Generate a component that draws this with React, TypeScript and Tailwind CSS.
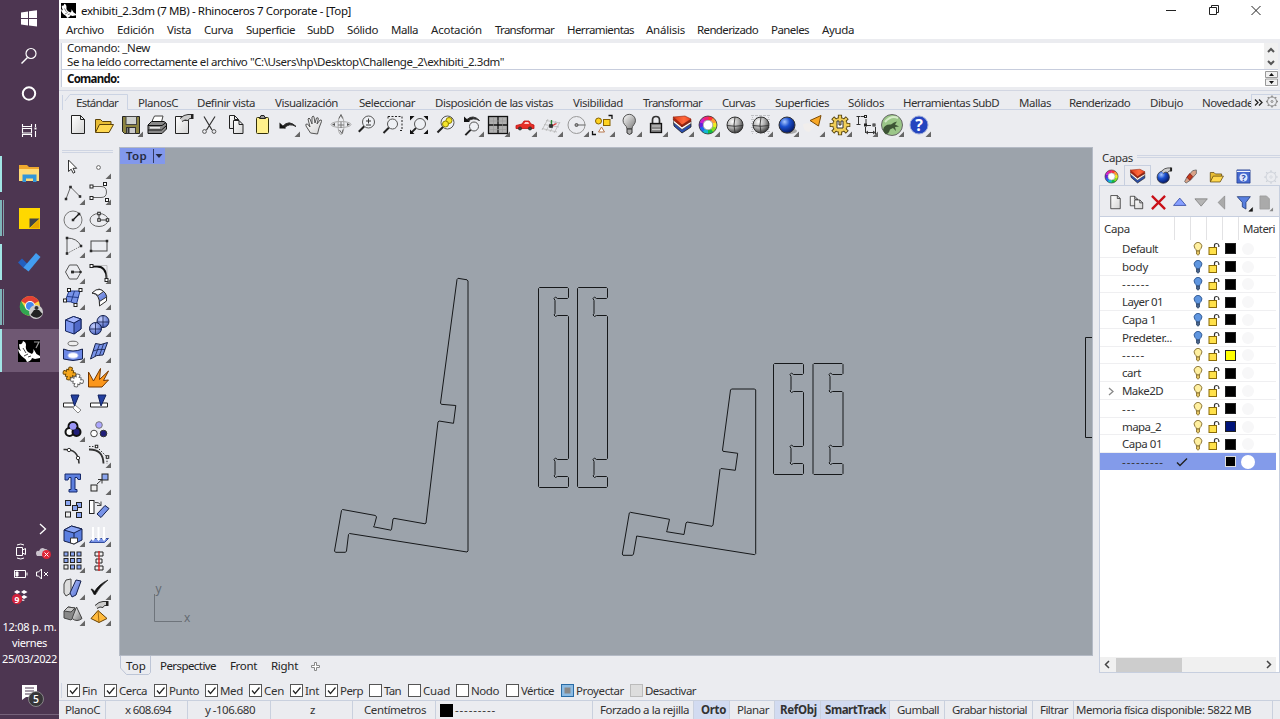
import React, { useLayoutEffect, useRef, useState } from "react";

type Item = [string, number, number];

/** Single line label whose tracking is adjusted to fill a given width. */
function Label({ text, w, className = "" }: { text: string; w: number; className?: string }) {
  const ref = useRef<HTMLSpanElement>(null);
  const [ls, setLs] = useState(0);
  useLayoutEffect(() => {
    if (ref.current) setLs((w - ref.current.getBoundingClientRect().width) / text.length);
  }, [w, text]);
  return (
    <span className={"block shrink-0 whitespace-nowrap " + className} style={{ width: w }}>
      <span ref={ref} style={{ letterSpacing: ls }}>{text}</span>
    </span>
  );
}

/** Row of labels; each item carries its start and end on the row's axis. */
function LabelRow({ items, start }: { items: Item[]; start: number }) {
  return (
    <>
      {items.map(([t, a, b], i) => (
        <div key={t} className="shrink-0" style={{ marginLeft: a - (i ? items[i - 1][2] : start) }}>
          <Label text={t} w={b - a} />
        </div>
      ))}
    </>
  );
}

function Ico({ children, tri = false, className = "h-[26px] w-[26px]" }: { children?: React.ReactNode; tri?: boolean; className?: string }) {
  return (
    <svg viewBox="0 0 26 26" className={"block shrink-0 overflow-visible " + className} fill="none" stroke="#333" strokeWidth="1">
      {children}
      {tri && <path d="M25 19.5V25H19.5Z" fill="#666" stroke="none" />}
    </svg>
  );
}

const Defs = () => (
  <svg className="absolute h-0 w-0">
    <defs>
      <linearGradient id="paper" x1="0" y1="0" x2="1" y2="1"><stop offset="0" stopColor="#fff" /><stop offset="1" stopColor="#d4d4d4" /></linearGradient>
      <linearGradient id="blue" x1="0" y1="0" x2="1" y2="1"><stop offset="0" stopColor="#b9c6fb" /><stop offset="1" stopColor="#4464cf" /></linearGradient>
      <linearGradient id="red" x1="0" y1="0" x2="1" y2="0"><stop offset="0" stopColor="#e03a18" /><stop offset=".6" stopColor="#ff6a3c" /><stop offset="1" stopColor="#f0401e" /></linearGradient>
      <linearGradient id="grey" x1="0" y1="0" x2="1" y2="1"><stop offset="0" stopColor="#fff" /><stop offset="1" stopColor="#777" /></linearGradient>
      <radialGradient id="ball" cx=".35" cy=".3" r=".8"><stop offset="0" stopColor="#fff" /><stop offset=".5" stopColor="#aaa" /><stop offset="1" stopColor="#222" /></radialGradient>
      <radialGradient id="bball" cx=".35" cy=".3" r=".8"><stop offset="0" stopColor="#a9c8ff" /><stop offset=".4" stopColor="#1a50cf" /><stop offset="1" stopColor="#020d50" /></radialGradient>
      <radialGradient id="sball" cx=".35" cy=".3" r=".8"><stop offset="0" stopColor="#c5d0ff" /><stop offset="1" stopColor="#3d58b8" /></radialGradient>
    </defs>
  </svg>
);

const Sq = ({ x, y, s = 3, f = "#fff" }: { x: number; y: number; s?: number; f?: string }) => (
  <rect x={x - s / 2} y={y - s / 2} width={s} height={s} fill={f} stroke="#222" />
);
const Page = ({ x = 6.5, y = 3.5, w = 13, h = 18 }: { x?: number; y?: number; w?: number; h?: number }) => (
  <path d={`M${x} ${y}h${w - 4}l4 4v${h - 4}h${-w}zM${x + w - 4} ${y}v4h4`} fill="url(#paper)" stroke="#222" />
);
const Folder = () => (
  <>
    <path d="M4.500 20V7.500h5l2 2h8.500v3" fill="#e8bd35" stroke="#5c430a" />
    <path d="M4.500 20.500 8.500 12.500h14l-4.500 8z" fill="#ffd850" stroke="#5c430a" />
  </>
);
const Hand = ({ x = 0, y = 0 }: { x?: number; y?: number }) => (
  <>
    <path transform={`translate(${x} ${y})`} d="M0 4.500 4 1.500 8 .5h4v4H9.500L8 6.500 5 6 2 7.500" fill="#ccc" stroke="#333" />
    <path transform={`translate(${x} ${y})`} d="M11 0h2.500v5H11z" fill="#222" stroke="none" />
  </>
);
const Lens = ({ cx = 15, cy = 10, r = 5.5, f = "#eef0f4" }: { cx?: number; cy?: number; r?: number; f?: string }) => (
  <>
    <path d={`M${cx - r * 0.7} ${cy + r * 0.7}L${cx - r * 0.7 - 5.5} ${cy + r * 0.7 + 5.5}`} strokeWidth="2" stroke="#222" />
    <circle cx={cx} cy={cy} r={r} fill={f} stroke="#555" />
  </>
);
const Wheel = () => {
  const cols = ["#f33", "#f93", "#ee2", "#8d2", "#1b4", "#1bc", "#26e", "#62d", "#c2c", "#e27"];
  return (
    <>
      {cols.map((c, i) => {
        const a = (i / 10) * 6.2832 - 1.57, b = ((i + 1.1) / 10) * 6.2832 - 1.57;
        return <path key={c} d={`M${13 + 7 * Math.cos(a)} ${13 + 7 * Math.sin(a)}A7 7 0 0 1 ${13 + 7 * Math.cos(b)} ${13 + 7 * Math.sin(b)}`} stroke={c} strokeWidth="4" />;
      })}
      <circle cx="13" cy="13" r="9" stroke="#333" strokeWidth=".8" />
      <circle cx="13" cy="13" r="4.800" stroke="#777" strokeWidth=".6" fill="#fff" />
    </>
  );
};
const LayersIcon = () => (
  <>
    <path d="M4.500 10 13 17l9-5.500V15l-9 6-8-7z" fill="#2a4fae" stroke="#1a1a1a" strokeWidth=".8" />
    <path d="M4.500 7.500 13 14.500 22 9v2.500L13 17.500 4.500 10.500z" fill="#fff" stroke="#444" strokeWidth=".6" />
    <path d="M4.300 5v3l8.700 7v-2.500z" fill="#b02410" stroke="#7a1c08" strokeWidth=".6" />
    <path d="M13 12.500V15l9-5.500V7z" fill="#8e2413" stroke="#7a1c08" strokeWidth=".5" />
    <path d="M4.300 5 16 4l6 3-9 6z" fill="url(#red)" stroke="#8a1c08" strokeWidth=".6" />
  </>
);
const Ball = ({ f = "url(#ball)", grid = true }: { f?: string; grid?: boolean }) => (
  <>
    <circle cx="13" cy="13" r="8" fill={f} stroke="#333" />
    {grid && <path d="M5 13.500Q13 15 21 13.500M13 5Q11 13 13 21" stroke="#333" strokeWidth=".9" />}
  </>
);
const ring = (cx: number, cy: number, r: number, d: number) =>
  Array.from({ length: 8 }, (_, i) => `M${cx + r * Math.cos(i * 0.785)} ${cy + r * Math.sin(i * 0.785)}L${cx + (r + d) * Math.cos(i * 0.785)} ${cy + (r + d) * Math.sin(i * 0.785)}`).join("");

const Puzzle = ({ x, y, f, s }: { x: number; y: number; f: string; s: string }) => (
  <path
    transform={`translate(${x} ${y}) rotate(12)`}
    d="M-3.500-3.500H-1.500Q-2.800-6.500 0-6.500T1.500-3.500H3.500V-1.500Q6.500-2.800 6.500 0T3.500 1.500V3.500H1.500Q2.800 6.500 0 6.500T-1.500 3.500H-3.500V1.500Q-6.500 2.800-6.500 0T-3.500-1.500Z"
    fill={f}
    stroke={s}
  />
);

const toolbar: [React.ReactNode, boolean][] = [
  [<Page />, false],
  [<Folder />, false],
  [<><path d="M4.500 4.500h17v17h-15l-2-2z" fill="#8d8440" stroke="#222" /><rect x="8" y="4.500" width="10.500" height="8" fill="#cfd2cf" stroke="#444" /><rect x="8.500" y="15.500" width="9" height="6" fill="#ccc" stroke="#333" /><path d="M10.500 16v5" strokeWidth="2" /></>, true],
  [<><path d="M8.500 12V8l2-4h8.500l-2 8" fill="#fff" stroke="#444" /><path d="M4 13l3.500-3.500H20l2.500 2v5.500L18 21.500H4z" fill="#888" stroke="#111" /><path d="M4 13.500h14l4-3M4 18h13.500l4.500-4" stroke="#111" /><path d="M6 15.800h10" stroke="#eee" strokeWidth="1.500" /></>, false],
  [<><Page x={5.500} y={4.500} w={13} h={17} /><Hand x={10} y={2} /></>, false],
  [<><path d="M8 4.500 16 18M19 4.500 10.500 18" stroke="#333" strokeWidth="1.200" /><circle cx="8.500" cy="19.500" r="1.900" stroke="#555" /><circle cx="18" cy="19.500" r="1.900" stroke="#555" /></>, false],
  [<><Page x={6.500} y={3.500} w={9} h={13} /><Page x={10.500} y={8.500} w={9.500} h={13} /></>, false],
  [<><rect x="7.500" y="5.500" width="12" height="16" rx="1" fill="#fff08c" stroke="#33300a" /><path d="M10.500 6.500 12 3.500h3l1.500 3z" fill="#999" stroke="#222" /></>, false],
  [<><path d="M8 14Q14 7.500 21 14.500 14 10.500 9.500 16z" fill="#222" stroke="#333" /><path d="M4.500 16.500V10.500l6.500 6z" fill="#111" stroke="none" /></>, true],
  [<path d="M9.500 21 5 14Q4 11.500 6.500 12l2.500 3-2-8q1-2 2 0l2 5V5q1.500-2 2 0l1 6 1.500-5q2-1 1.800 1L16 12l3-4q2-.5 1.500 1.500L18 16l-1.500 6z" fill="url(#paper)" stroke="#555" />, false],
  [<><ellipse cx="13" cy="12.500" rx="10" ry="3" stroke="#aaa" /><ellipse cx="13" cy="13" rx="3" ry="9.500" stroke="#aaa" /><path d="m11 6.500 2-4 1.500 4M15 17.500l-1 4-2.500-3.500" stroke="#666" /><path d="m7 11-3 1.500L7 14zm12 0 3 1.500-3 1.500z" fill="#555" stroke="none" /><path d="M13 10v6M10 13h6" stroke="#777" /></>, false],
  [<><Lens cx={14.500} cy={10} r={6} /><path d="M12 9h5M14.500 6.500v5M12 13h5" /></>, false],
  [<><path d="M8 4.500h14v14h-3M8 4.500V8" stroke="#222" strokeDasharray="2 1.500" /><Lens cx={12.500} cy={12} r={5} /></>, false],
  [<><Lens cx={14} cy={12} r={5.500} /><path d="M4 8.500V4h4.500zM17.500 4H22v4.500zM22 17.500V22h-4.500zM4 17.500V22h4.500z" fill="#111" stroke="none" /></>, false],
  [<><Lens cx={14.500} cy={10.500} r={6.500} /><circle cx="16" cy="8.500" r="3" fill="#f5e52b" stroke="#8d8000" /><circle cx="12.500" cy="12" r="3" fill="#f5e52b" stroke="#8d8000" /></>, false],
  [<><path d="M8 7.500Q14 2 20.500 8.500 14 5 9.500 9z" fill="#222" /><path d="M5 10V4.500l6 5.500z" fill="#111" stroke="none" /><Lens cx={15} cy={14.500} r={4.500} /></>, true],
  [<><rect x="3.500" y="4.500" width="19" height="17" fill="#b0b0b0" stroke="#111" strokeWidth="1.300" /><path d="M13 4.500v17M3.500 13h19" stroke="#111" strokeWidth="1.300" /><path d="M8.500 5v16M17.500 5v16M4 9h18M4 17.500h18" stroke="#999" strokeWidth=".6" /></>, true],
  [<><path d="M4 13.500 10 12l2-3h5l2 3 3 1v3.500h-18z" fill="#e83028" stroke="#c01010" strokeWidth=".8" /><path d="m12 12 1.200-2h3l1 2z" fill="#fcc" stroke="none" /><circle cx="8" cy="16.500" r="1.600" fill="#444" stroke="#222" strokeWidth=".6" /><circle cx="18" cy="16.500" r="1.600" fill="#444" stroke="#222" strokeWidth=".6" /></>, true],
  [<><path d="M8 8.500 22 11M6 12.500 21 15M4 16.500 19 20M10 7 4 18M14 8 8 19M18 9l-6 11M22 10l-6 11" stroke="#b8b8b8" strokeWidth=".8" /><path d="M13.500 14V8" stroke="#288a35" strokeWidth="1.300" /><path d="m13.500 14 5-2.500" stroke="#d33" strokeWidth="1.300" /><Sq x={13} y={14} s={2.5} f="#444" /></>, true],
  [<><circle cx="12.500" cy="13" r="8.500" stroke="#999" /><path d="M12.500 13h9" stroke="#666" /><circle cx="12.500" cy="13" r="1.500" fill="#999" stroke="#555" /></>, true],
  [<><circle cx="8.500" cy="9" r="3" fill="#ffd21f" stroke="#866100" /><rect x="13.500" y="7.500" width="6.500" height="6" fill="#ffd21f" stroke="#866100" /><path d="m11.500 15 3 5h-6z" fill="#fff" stroke="#b5764d" /><path d="M18.500 3.500H22V7M2.500 19v3.500H6" stroke="#111" strokeWidth="1.300" /></>, true],
  [<><path d="M10 17Q10 14.500 7.500 12.500a6.200 6.200 0 1 1 9.500 0Q15 14.500 15 17z" fill="url(#grey)" stroke="#555" /><path d="M10 17v4l2.500 1.500L15 21V17z" fill="#aaa" stroke="#333" /></>, true],
  [<><path d="M9.500 13V8q0-3.500 3.500-3.500T16.500 8v5" stroke="#333" strokeWidth="1.700" /><rect x="7.500" y="11.500" width="11" height="9" fill="#888" stroke="#111" strokeWidth="1.300" /><path d="M9 14h8.500M9 17.500h8.500" stroke="#ccc" /></>, true],
  [<LayersIcon />, true],
  [<Wheel />, true],
  [<Ball />, false],
  [<><path d="M3 3.500h20M3 7.500h20M3 11.500h20M3 15.500h20M3 19.500h20M4.500 3v20M8.500 3v20M12.500 3v20M16.500 3v20M20.500 3v20" stroke="#c0c1c5" strokeDasharray="1 1" /><Ball /></>, true],
  [<><ellipse cx="15" cy="19" rx="8" ry="3" fill="#aaa" stroke="none" /><Ball f="url(#bball)" grid={false} /></>, true],
  [<><path d="M3 12q8-2 12 2l-6 6q-6-1-6-8z" fill="#f1eeec" stroke="none" /><path d="M10 8.500 21 3.500 18.500 14z" fill="#f9a825" stroke="#7b4a05" /></>, true],
  [<><path d={ring(13, 13, 6, 4.3)} stroke="#514010" strokeWidth="4.200" /><circle cx="13" cy="13" r="7.300" fill="#f1cf58" stroke="#514010" /><path d={ring(13, 13, 6, 3.5)} stroke="#f1cf58" strokeWidth="2.400" /><path d="M10 9v7h6V9h-2v4h-2V9z" fill="#fff" stroke="#333" /></>, true],
  [<><path d="M3.500 4.500h4M5.500 4.500V12M3.500 12.500h4" stroke="#333" /><path d="M8 4.500h5M13 7v6M11 13.500h7M12.500 15v6M22.500 15v7M14 20.500h7" stroke="#333" /><path d="m15 19-2 1.500 2 1.500m5-3 2 1.500-2 1.500" /><Sq x={12.500} y={4.500} s={2} /><Sq x={12.500} y={13} s={2} /><Sq x={21} y={13} s={2} /></>, true],
  [<><circle cx="13" cy="13" r="10.500" fill="#9bc688" stroke="#666" /><path d="M6 10q6-7 13-4" stroke="#d5ecc8" strokeWidth="2" /><path d="M4 18Q5 12 12 12.500l3-2 3-1-2 3 4 2-4 .5 1 4-3-3-3 1.500q-1 4-4 5Q5 21 4 18z" fill="#3d5435" stroke="none" /></>, true],
  [<><circle cx="13" cy="13" r="9" fill="#2445bf" stroke="#9ca9d9" /><text x="13" y="19" fontSize="16" fontWeight="700" fontFamily="Open Sans, sans-serif" textAnchor="middle" fill="#fff" stroke="none">?</text></>, true],
];

const palette: [React.ReactNode, boolean][] = [
  [<path d="M8.500 6v11.500l2.700-2.300 2 4 1.800-1-2-3.900h3.700z" fill="#fff" stroke="#333" />, false],
  [<circle cx="12.500" cy="13.500" r="1.900" fill="#fff" stroke="#666" />, true],
  [<><path d="M6 19 10.500 7l9.500 9.500" stroke="#666" /><Sq x={6} y={19} s={1.5} f="#777" /><Sq x={10.500} y={7} s={1.5} f="#777" /><Sq x={20} y={16.500} s={1.5} f="#777" /></>, true],
  [<><path d="M6 6.500h9q5.500 0 5.500 5.500T15 17.500H6" stroke="#666" /><Sq x={5.500} y={6.500} /><Sq x={19} y={4} /><Sq x={5.500} y={18} /><Sq x={21} y={20} /></>, true],
  [<><circle cx="13" cy="13" r="9" stroke="#777" /><path d="m13 13 6-6" stroke="#111" strokeWidth="1.300" /><Sq x={13} y={13} s={1.5} f="#777" /><Sq x={19} y={7} s={1.5} f="#777" /></>, true],
  [<><ellipse cx="13" cy="13" rx="9" ry="6.500" stroke="#666" /><path d="M13 7v6h8" stroke="#333" /><Sq x={13} y={6.500} s={2.5} /><Sq x={13} y={13} s={2.5} /><Sq x={21.500} y={13} s={2.5} /></>, true],
  [<><path d="M7 5v16M7 5q10 0 14 8" stroke="#555" /><path d="m7 20.500 14-7.500" stroke="#777" strokeDasharray="1.500 1" /><Sq x={7} y={5} s={1.5} f="#777" /><Sq x={7} y={20.500} s={1.5} f="#777" /><Sq x={21} y={13} s={1.5} f="#777" /></>, true],
  [<><rect x="5" y="8" width="16" height="10" stroke="#444" /><Sq x={5} y={18} s={1.5} /><Sq x={21} y={8} s={1.5} /></>, true],
  [<><path d="m5.500 13 4-7h7.500l4 7-4 7H9.500z" stroke="#555" /><path d="M13 13h7" /><Sq x={12.500} y={13} s={1.8} f="#777" /><Sq x={20.500} y={13} s={1.2} f="#777" /></>, true],
  [<><path d="M6 7.500h5q9.500 0 9.500 12" stroke="#111" strokeWidth="1.800" /><path d="M7 6.500h14v14" stroke="#aaa" strokeWidth=".7" /><Sq x={5.500} y={7} /><Sq x={20.500} y={21} /></>, true],
  [<><path d="M9 6h11l-3.500 13q-6-3-11.500-2.500z" fill="#7893e8" stroke="#223a88" /><path d="m14.500 6-3.500 11M7 11.500l11.500 1" stroke="#223a88" /><Sq x={9} y={5} /><Sq x={20.500} y={5} /><Sq x={5} y={15.500} /><Sq x={15.500} y={20} /></>, true],
  [<><path d="M6 8Q14 9 13.500 20l7-5Q22 7 13 4z" fill="url(#blue)" stroke="#222" /><path d="m6 8q4-4.500 8-3.500 2 .5 3.500 2L12 10.500Q10 8 6 8z" fill="#fff" stroke="#333" /><path d="M13.500 16.500v4.500l7-5V12z" fill="#fff" stroke="#333" /></>, true],
  [<><path d="m5.500 8 8-3.500 7.500 2.500v10l-7 5-8.500-3z" fill="#7b95ee" stroke="#14245c" /><path d="M14 11v11l7-5V7z" fill="#5069c8" stroke="#14245c" /><path d="m5.500 8 8-3.500L21 7l-7 4z" fill="#a9b9ff" stroke="#14245c" /></>, true],
  [<><circle cx="17" cy="9.500" r="6" fill="url(#sball)" stroke="#14204c" /><circle cx="9.500" cy="16.500" r="6" fill="url(#sball)" stroke="#14204c" /><path d="M3.500 17h12M9.500 10.500v12M11 10h12M17 3.500v12" stroke="#14204c" strokeWidth=".8" /></>, true],
  [<><path d="M3.500 11q9.500 4 19 0v10q-9.500 3-19 0z" fill="#6c88e6" stroke="#14204c" /><ellipse cx="13" cy="17.500" rx="5" ry="2.800" fill="#fff" stroke="#b6c4f5" /><ellipse cx="13" cy="5.500" rx="5" ry="2.300" fill="#eee" stroke="#666" /></>, true],
  [<><path d="M9.500 5.500q5 2.500 12-1L17 17q-6-1-12.500 4z" fill="#7893e8" stroke="#14204c" /><path d="M7 13q6-2.500 12-1.500M13.500 6.500 9 18.500M17.500 6l-4 11.500" stroke="#14204c" strokeWidth=".8" /></>, true],
  [<><Puzzle x={9.500} y={9.500} f="#f5a61b" s="#6a4705" /><Puzzle x={17} y={16.500} f="#fff" s="#666" /></>, false],
  [<path d="M2.500 23V8l5 9 7-12.500-1 11L22.500 7l-5 9.500 5-.500L16 23z" fill="#fb961b" stroke="#713600" />, false],
  [<><path d="M3.500 12h11v4h-11z" fill="#fff" stroke="#222" /><path d="m15 14 6 5-3 3-5-5z" fill="#fff" stroke="#888" /><path d="M11 4h8l-4.500 11z" fill="#2440a0" stroke="#10205c" /></>, false],
  [<><path d="M4.500 12h17v4h-17z" fill="#fff" stroke="#222" /><path d="M12 4h8l-5 11z" fill="#2440a0" stroke="#10205c" /></>, false],
  [<><circle cx="13" cy="9.500" r="4.500" fill="#9a95f6" stroke="#111" strokeWidth="2" /><circle cx="9.500" cy="15" r="4" fill="#fff" stroke="#111" strokeWidth="2" /><circle cx="16.500" cy="15" r="4" fill="#201e78" stroke="#111" strokeWidth="2" /><circle cx="13" cy="9.500" r="3.300" fill="#9a95f6" stroke="none" /></>, true],
  [<><circle cx="13" cy="8" r="3.300" fill="#aaa5ff" stroke="#777" /><circle cx="8" cy="16.500" r="3.300" fill="#fff" stroke="#444" /><circle cx="17.500" cy="16.500" r="3.300" fill="#201e78" stroke="#333" /></>, false],
  [<><path d="M3.500 6.500q15-1 15.500 14" strokeWidth="1.600" /><circle cx="9" cy="7" r="1.700" fill="#fff" /><circle cx="18" cy="15" r="1.700" fill="#fff" /></>, false],
  [<><path d="M3 6.500Q17 6 17.500 20.500" strokeWidth="1.800" /><path d="M3 3.500h8M13 6l8 8v7" strokeDasharray="1.500 1.500" /><Sq x={10.500} y={3.500} s={2.5} /><Sq x={21.500} y={14} s={2.5} /></>, true],
  [<path d="M5 4h15.500v5.500H18l-1-2h-2V19.500h2v2.500H9v-2.500h2V7.500H9l-1 2.500H5z" fill="#5c7fdf" stroke="#15286a" />, false],
  [<><Sq x={8} y={18} s={6} f="#eee" /><Sq x={19} y={7} s={6} f="#8aa5f0" /><path d="m11 14 5-4.500m0 4v-4h-4" /></>, true],
  [<><Sq x={8} y={7} s={5} f="#8aa5f0" /><Sq x={8} y={18.500} s={5} f="#eee" /><Sq x={19} y={9} s={5} f="#8aa5f0" /><Sq x={15} y={12} s={5} f="#8aa5f0" /><Sq x={19} y={19} s={5} f="#8aa5f0" /></>, false],
  [<><rect x="3.500" y="4.500" width="4.500" height="13" fill="#fff" stroke="#222" /><path d="m11 18 8-8.500 4 3-8 9z" fill="#7893e8" stroke="#14204c" /><path d="M9 6.500q4-1 6 3m0-4v4h-4" stroke="#444" /></>, false],
  [<><path d="M4 8l7.500-4L22 7v11l-8 4-10-3z" fill="#5b7fe0" stroke="#14204c" /><path d="M4 8l7.500-4L22 7l-8 4z" fill="#8ba6f5" stroke="#14204c" /><path d="M14 11v6" stroke="#14204c" /><path d="M10.500 16h7v4L14 22l-3.500-1z" fill="#fff" stroke="#333" /></>, true],
  [<><path d="M7 16.500h15.500l-4 4H3.500z" fill="#7893e8" stroke="#344d9b" /><path d="M7 5v13M12.500 5v13M18 5v13" stroke="#fff" strokeWidth="2" /><path d="m5 15.500 2 3 2-3m1.500 0 2 3 2-3m1.500 0 2 3 2-3" stroke="#fff" /></>, true],
  [<>{[6, 12.5, 19].map((x, i) => [6, 12.5, 19].map((y, j) => <Sq key={`${x}${y}`} x={x} y={y} s={4} f={i === 0 && j === 2 ? "#eee" : "#8aa5f0"} />))}</>, true],
  [<><path d="M9 4h8v4H9zM10 11h6v4h-6zM9 18h8v4H9z" fill="#eee" stroke="#222" /><path d="M13 3v20" stroke="#d22" strokeWidth="1.400" /></>, true],
  [<><path d="m4 9 2-4 5-1v14l-5 3-2-3z" fill="#ddd" stroke="#444" /><path d="m10 18 6-13 5 1-5 14-4 2z" fill="url(#blue)" stroke="#14204c" /></>, true],
  [<path d="M5 14q2-.5 3.500 2.500Q13 9 22 5 13 12 9.500 19.500H8Q7 17 5 14z" fill="#111" stroke="#111" strokeWidth=".6" />, true],
  [<><path d="m4 10 4-4 7 1v8l-4 4-7-2z" fill="#888" stroke="#444" /><path d="m4 10 4-4 7 1-4 4z" fill="#ccc" stroke="#444" /><path d="m16.500 6 5.500 11.500q-5 4-10 0z" fill="url(#grey)" stroke="#444" /></>, true],
  [<><path d="m5 17.500 7-8 9 8-8 4z" fill="#ffba3d" stroke="#664004" /><path d="m12 9.500 1 12" stroke="#a46a0d" /><Hand x={9} y={0} /></>, true],
];

const menu: Item[] = [
  ["Archivo", 66, 104], ["Edición", 117, 154], ["Vista", 167, 191], ["Curva", 204, 233], ["Superficie", 246, 295], ["SubD", 307, 334],
  ["Sólido", 347, 378], ["Malla", 391, 418], ["Acotación", 431, 482], ["Transformar", 495, 554], ["Herramientas", 567, 634],
  ["Análisis", 646, 685], ["Renderizado", 697, 758], ["Paneles", 771, 809], ["Ayuda", 822, 854],
];
const tabs: Item[] = [
  ["Estándar", 76, 118], ["PlanosC", 138, 178], ["Definir vista", 197, 255], ["Visualización", 275, 338], ["Seleccionar", 359, 415],
  ["Disposición de las vistas", 435, 553], ["Visibilidad", 573, 623], ["Transformar", 643, 702], ["Curvas", 722, 755], ["Superficies", 775, 829],
  ["Sólidos", 848, 884], ["Herramientas SubD", 903, 999], ["Mallas", 1019, 1051], ["Renderizado", 1069, 1130], ["Dibujo", 1150, 1183], ["Novedade", 1202, 1253],
];
const snaps: [string, number, number, number][] = [
  ["Fin", 67, 97, 1], ["Cerca", 104, 147, 1], ["Punto", 154, 199, 1], ["Med", 205, 243, 1], ["Cen", 249, 284, 1], ["Int", 290, 319, 1], ["Perp", 325, 363, 1],
  ["Tan", 369, 401, 0], ["Cuad", 408, 450, 0], ["Nodo", 456, 499, 0], ["Vértice", 506, 554, 0], ["Proyectar", 561, 624, 2], ["Desactivar", 630, 696, 3],
];
// label, cell start, text start, text end, cell end, active
const status: [string, number, number, number, number, boolean][] = [
  ["PlanoC", 59, 65, 100, 106, false], ["x 608.694", 106, 125, 171, 188, false], ["y -106.680", 188, 205, 255, 271, false], ["z", 271, 310, 315, 353, false],
  ["Centímetros", 353, 364, 426, 436, false], ["---------", 436, 455, 496, 593, false], ["Forzado a la rejilla", 593, 600, 689, 694, false],
  ["Orto", 694, 701, 726, 730, true], ["Planar", 730, 737, 769, 775, false], ["RefObj", 775, 780, 817, 821, true], ["SmartTrack", 821, 825, 886, 890, true],
  ["Gumball", 890, 897, 939, 945, false], ["Grabar historial", 945, 952, 1027, 1033, false], ["Filtrar", 1033, 1040, 1068, 1074, false],
  ["Memoria física disponible: 5822 MB", 1074, 1076, 1251, 1273, false],
];
// name, name width, bulb on, swatch
const layers: [string, number, boolean, string][] = [
  ["Default", 36, true, "#000"], ["body", 26, false, "#000"], ["------", 28, false, "#000"], ["Layer 01", 41, false, "#000"], ["Capa 1", 34, false, "#000"],
  ["Predeter...", 50, false, "#000"], ["-----", 23, true, "#ffff00"], ["cart", 19, true, "#000"], ["Make2D", 41, true, "#000"], ["---", 14, true, "#000"],
  ["mapa_2", 39, true, "#00147a"], ["Capa 01", 40, true, "#000"],
];

function Rhino({ seven = false, className = "" }: { seven?: boolean; className?: string }) {
  return (
    <svg viewBox="0 0 22 22" className={className}>
      <rect width="22" height="22" fill="#000" />
      <path d="M1 4q3 1 4-3 3 1 3 4-1 4 2 7l4 2q2-2 1.500-5l3 5 3.500 2v2l-5 1-3-1q-1 3-5 4-1-3-3-4Q1 15 0 9l3 2Q1 8 1 4z" fill="#fff" />
      <path d="m5 8 3 5M6 16l4-2M10 17l3-1" stroke="#333" strokeWidth=".9" />
      {seven && <path d="M16 2h5l-3 6" fill="none" stroke="#999" strokeWidth="1.200" />}
    </svg>
  );
}

function Sidebar() {
  return (
    <aside className="flex h-[719px] w-[59px] shrink-0 flex-col bg-[#4d3651] text-white">
      <svg width="59" height="152" fill="none" stroke="#fff">
        <path d="m21 12.500 7-1V18h-7zM29 11.300l8-1.100V18h-8zM21 19h7v6.500l-7-1zM29 19h8v7.500l-8-1.100z" fill="#fff" stroke="none" />
        <circle cx="31" cy="53.500" r="5" strokeWidth="1.200" /><path d="m27.500 57.500-6 6" strokeWidth="1.400" />
        <circle cx="29" cy="93.500" r="6.200" strokeWidth="2" />
        <path d="M22.500 124v2.500h9V124M22.500 137v-2.500h9v2.500M22.500 127.500v6M31.500 127.500v6M22 128.500h10M22 133h10M35.500 124v3M35.500 131v6" strokeWidth="1.100" /><path d="M34.500 127.500h2v2h-2z" fill="#fff" stroke="none" />
      </svg>
      <div className="flex h-[44px] items-center"><i className="h-9 w-[2px] bg-[#a1e5e5]" /><svg width="24" height="24" viewBox="0 0 24 24" className="ml-[15px]"><path d="M2 3h8l2 2h10v14H2z" fill="#efa92e" /><path d="M2 7h20v12H2z" fill="#ffdc78" /><path d="M5.500 20v-7.500h14V20h-3.500v-3.500H9V20z" fill="#3296d8" /></svg></div>
      <div className="flex h-[44px] items-center"><i className="h-9 w-[2px] bg-[#7fb5b9]" /><i className="ml-px h-9 w-px bg-[#7fa5ab]" /><svg width="24" height="24" viewBox="0 0 24 24" className="ml-[13px]"><path d="M2 2h21v21H2z" fill="#ffd800" /><path d="M12.500 22V12.500h10z" fill="#444" /><path d="M13 22.500 22.500 13v9.500z" fill="#e6a600" /></svg></div>
      <div className="flex h-[44px] items-center"><i className="h-9 w-[2px] bg-[#a1e5e5]" /><svg width="24" height="24" viewBox="0 0 24 24" className="ml-[15px]"><path d="m1 12.500 4-4 6 6-3.500 4.500z" fill="#235fbd" /><path d="M6.500 17.500 19 3l4.500 4L11.500 21.500z" fill="#439df0" /></svg></div>
      <div className="flex h-[45px] items-center"><i className="h-9 w-[2px] bg-[#7fb5b9]" /><i className="ml-px h-9 w-px bg-[#7fa5ab]" /><svg width="26" height="26" viewBox="0 0 26 26" className="ml-[14px]"><circle cx="12" cy="12" r="10" fill="#ffd043" /><path d="M12 12 3 7Q12-3 21 7z" fill="#e44134" /><path d="M12 22Q-2 20 3 7l5 8 5 2z" fill="#31a650" /><circle cx="12" cy="12" r="5" fill="#fff" /><circle cx="12" cy="12" r="4" fill="#4486ed" /><circle cx="18" cy="18" r="7" fill="#ccc" /><circle cx="18.500" cy="14" r="2" fill="#333" /><path d="M16 16h5l3.500 4q-5 7-12 1z" fill="#222" /></svg></div>
      <div className="flex h-[43px] items-center bg-[#6f5873]"><i className="h-full w-[2px] bg-[#a1e5e5]" /><Rhino seven className="ml-4 h-[22px] w-[22px]" /></div>
      <svg width="59" height="237" viewBox="0 372 59 237" fill="none" stroke="#fff" className="mb-[10px] shrink-0">
        <path d="m40 524 5.500 5-5.500 5" strokeWidth="1.300" />
        <path d="M16.500 547.500h6v8h-6zm6 2.500 3-1.500v6l-3-1.500M17 545q4-2 7 0M17 558q4 2 7 0" />
        <path d="M36 554q0-4 3-3 2-5 6-2 4 0 3 5-2 3-6 2h-5z" fill="#cbc3cd" stroke="none" /><circle cx="46.500" cy="554.500" r="4.500" fill="#df2638" stroke="none" /><path d="m44.500 552.500 4 4m0-4-4 4" />
        <path d="M14.500 570.500h11v7h-11zM27 572.500v3" /><path d="M16 572h2v4h-2z" fill="#fff" />
        <path d="M36.500 572h2l3-3v10l-3-3h-2zM44 572l4 4m0-4-4 4" />
        <path d="m17 590 3.500 2-3.500 2-3-2zm7 0 3.500 2-3.500 2-3-2zm0 5 3.500 2-3.500 2-3-2zM20 599l3 2 2-1" fill="#fff" stroke="none" /><circle cx="17" cy="599" r="5.200" fill="#d2233c" stroke="none" />
        <text x="17" y="602.500" fontSize="8.500" fontWeight="700" fontFamily="Open Sans, sans-serif" textAnchor="middle" fill="#fff" stroke="none">9</text>
      </svg>
      <div className="flex flex-col items-center text-[11px] leading-4"><Label text="12:08 p. m." w={54} /><Label text="viernes" w={35} /><Label text="25/03/2022" w={55} /></div>
      <svg width="59" height="52" viewBox="0 667 59 52" className="shrink-0"><path d="M22 685h15v12H26l-4 3z" fill="#fff" /><path d="M25 688h9M25 691h9M25 694h6" stroke="#4d3651" /><circle cx="36" cy="699" r="7.500" fill="#373638" stroke="#999" strokeWidth=".8" /><text x="36" y="703" fontSize="10.500" fontWeight="600" fontFamily="Open Sans, sans-serif" textAnchor="middle" fill="#fff">5</text><path d="M0 714.500h59" stroke="#75627a" /></svg>
    </aside>
  );
}

function Drawing() {
  const bar = (l: number, t: number, b: number, n: number) => {
    const r = l + 30, a = t + 11, c = t + 28, d = b - 28, e = b - 11;
    return `M${l + 1} ${t}H${r - 1}l1 1V${a - 1}l-1 1H${n + 2}l-2-1.500-1.500 1.500 1 2V${c - 2}l-1 1.500 1.500 1.500 2-1H${r - 1}l1 1V${d - 1}l-1 1H${n + 2}l-2-1.500-1.500 1.500 1 2V${e - 2}l-1 1.500 1.500 1.500 2-1H${r - 1}l1 1V${b - 1}l-1 1H${l + 1}l-1-1V${t + 1}z`;
  };
  return (
    <svg viewBox="120 148 972 507" width="972" height="507" fill="none" stroke="#16181a" strokeWidth="1" strokeLinejoin="round" className="absolute left-0 top-0">
      <path d="M457 279.500 458 278.300 467 279.800 468 281V551L467 552 349.500 533.500 348.500 534.500 346.500 551 345.500 552.300H335.500L334.500 551 341.500 510.500 342.500 509.500 375.500 515.500 376.500 517 374.300 525.500 373.500 526.800 391 530.200 391.500 529.500 393 519 394 518.300 425 523.800 426 523 438 422 439 421 453.500 423.300 455.800 405.500 441.300 404.300 440.500 403z" />
      <path d="M730.500 390 731.500 389H754.700L755.700 390V553.700L754.700 554.700 636.700 536 633.500 554 632.500 555.300H623L622.300 554 629.300 513 630.300 512.300 669.500 519.300 667 530.500 666.500 531.700 684 534.500 686 523 687 522 712 526.300 713 525 720 469.500 721 468.500 735.300 470.300 737.700 453.300 723 451.300 722.500 450z" />
      <path d={bar(538.5, 287.5, 487.5, 555.5)} /><path d={bar(577.5, 287.5, 487.5, 594.5)} />
      <path d={bar(773.5, 363.5, 474.5, 791.5)} /><path d={bar(813, 363.5, 474.5, 830.5)} />
      <path d="M1092 337.500H1085.500V437.500H1092" />
      <path d="M154.500 594V621.500H182" stroke="#6e747b" />
      <text x="155.500" y="593" fontSize="12" fontFamily="Open Sans, sans-serif" fill="#62686f" stroke="none">y</text>
      <text x="184" y="622" fontSize="12" fontFamily="Open Sans, sans-serif" fill="#62686f" stroke="none">x</text>
    </svg>
  );
}

const Bulb = ({ on }: { on: boolean }) => (
  <svg width="10" height="14" viewBox="0 0 10 14"><path d="M3.500 9Q3.300 7.500 2 6.500a3.800 3.800 0 1 1 6 0Q6.700 7.500 6.500 9z" fill={on ? "#fff0a0" : "#5f96e0"} stroke={on ? "#8c7538" : "#355c95"} /><path d="M3.500 9v3l1.500 1.200L6.500 12V9z" fill={on ? "#e4c564" : "#47638b"} stroke={on ? "#806827" : "#2f4566"} strokeWidth=".8" /></svg>
);
const Lock = () => (
  <svg width="12" height="14" viewBox="0 0 12 14"><path d="M6.500 6V3.500Q6.500 1.500 8.500 1.500T10.800 3.500V5" fill="none" stroke="#333" strokeWidth="1.200" /><rect x="1" y="5.500" width="7.500" height="7" fill="#ffe14a" stroke="#8a6b08" /></svg>
);

function LayerPanel() {
  return (
    <aside className="flex h-[525px] w-[188px] shrink-0 flex-col pl-[7px]">
      <div className="flex h-[17px] items-center pl-[3px] pt-[2px]"><Label text="Capas" w={31} /><i className="-mt-[2px] ml-[4px] h-[3px] flex-1 border-y border-[#cfd5e3]" /></div>
      <div className="flex h-[20px] items-center">
        <div className="flex w-[25px] justify-center pt-[2px]"><Ico className="h-[19px] w-[19px]"><Wheel /></Ico></div>
        <div className="flex h-[20px] w-[27px] items-center justify-center border border-b-0 border-[#c7cfdf] pt-px"><Ico className="h-[21px] w-[21px]"><LayersIcon /></Ico></div>
        <div className="flex w-[25px] justify-center pt-[2px]"><Ico className="h-[20px] w-[20px]"><circle cx="12" cy="14.500" r="8" fill="url(#bball)" stroke="#333" /><Hand x={10} y={2} /></Ico></div>
        <div className="flex w-[28px] justify-center pt-[2px]"><Ico className="h-[19px] w-[19px]"><path d="M5 20 8 14l8-9 5-1v5l-8 9-6 4z" fill="#d8a288" stroke="#555" /><path d="m8 14 4 4 4-5-4-4z" fill="#c33c17" stroke="#712" /></Ico></div>
        <div className="flex w-[25px] justify-center pt-[2px]"><Ico className="h-[19px] w-[19px]"><Folder /></Ico></div>
        <div className="flex w-[28px] justify-center pt-[2px]"><Ico className="h-[19px] w-[19px]"><path d="M4 4h18v18H4z" fill="#4669cf" stroke="#223d8b" /><path d="M4 6h18" stroke="#fff" strokeWidth="1.500" /><circle cx="13" cy="14.500" r="5.500" fill="#dee7ff" stroke="none" /><text x="13" y="19" fontSize="12" fontWeight="700" textAnchor="middle" fill="#2547a9" stroke="none" fontFamily="Open Sans, sans-serif">?</text></Ico></div>
        <div className="flex w-[22px] justify-end pt-[3px]"><Ico className="h-[16px] w-[16px]"><circle cx="13" cy="13" r="8" stroke="#ccd0d8" strokeWidth="1.500" /><path d={ring(13, 13, 8, 3)} stroke="#ccd0d8" strokeWidth="2" /><circle cx="13" cy="13" r="2" stroke="#ccd0d8" /></Ico></div>
      </div>
      <div className="flex h-[489px] w-[181px] flex-col border border-[#c7cfdf]">
        <div className="flex h-[31px] items-center border-b border-[#c7cfdf] pl-[6px] pt-[3px]">
          <Ico className="mr-[2px] h-[19px] w-[19px]"><Page /></Ico>
          <Ico className="mr-[3px] h-[19px] w-[19px]"><Page x={4.500} y={4.500} w={10} h={13} /><Page x={10.500} y={9.500} w={11} h={12} /></Ico>
          <Ico className="mr-[3px] h-[19px] w-[19px]"><path d="m4 4 18 18M22 4 4 22" stroke="#c91018" strokeWidth="3.200" /></Ico>
          <Ico className="mr-[2px] h-[19px] w-[19px]"><path d="M12 7 20.500 17h-17z" fill="#879fff" stroke="#233d9b" /></Ico>
          <Ico className="mr-[2px] h-[19px] w-[19px]"><path d="M4 8h17L12.500 18z" fill="#b5b5b5" stroke="#777" /></Ico>
          <Ico className="mr-[3px] h-[19px] w-[19px]"><path d="M16 4v18L7 13z" fill="#aaa" stroke="#888" /></Ico>
          <Ico className="mr-[3px] h-[19px] w-[19px]"><path d="M3 5h18l-6 8v9l-5-3v-6z" fill="#587fe0" stroke="#18306c" /><path d="M24 20v5h-5z" fill="#111" /></Ico>
          <Ico className="h-[19px] w-[19px]"><path d="M4 4h9l4 4v14H4z" fill="#aaa" stroke="#999" /><path d="M22 20v5h-5z" fill="#888" stroke="none" /></Ico>
        </div>
        <div className="flex min-h-0 flex-1 flex-col bg-white pr-[3px]">
          <div className="flex h-[23px] shrink-0 items-center">
            <div className="w-[74px] pl-[4px]"><Label text="Capa" w={26} /></div>
            <i className="h-full w-4 border-l border-[#e2e2e4]" /><i className="h-full w-4 border-l border-[#e2e2e4]" /><i className="h-full w-4 border-l border-[#e2e2e4]" /><i className="h-full w-4 border-l border-[#e2e2e4]" />
            <div className="flex h-full items-center border-l border-[#e2e2e4] pl-[4px]"><Label text="Materi" w={32} /></div>
          </div>
          {layers.map(([n, w, on, c]) => (
            <div key={n + w} className="flex h-[17.770px] shrink-0 items-center border-b border-[#efeff1] pt-px">
              <div className="flex w-[22px] pl-[8px]">{n === "Make2D" && <svg width="6" height="9" fill="none" stroke="#888" strokeWidth="1.300"><path d="m1 1 4 3.500-4 3.500" /></svg>}</div>
              <div className="w-[71px]"><Label text={n} w={w} /></div>
              <Bulb on={on} /><i className="w-[5px]" /><Lock /><i className="w-[5px]" />
              <i className="h-[11px] w-[11px] border border-[#222]" style={{ background: c }} /><i className="ml-[6px] h-[12px] w-[12px] rounded-full bg-[#f7f7f8]" />
            </div>
          ))}
          <div className="flex h-[17px] shrink-0 items-center bg-[#839bea]">
            <div className="w-[75px] pl-[22px]"><Label text="---------" w={42} /></div>
            <svg width="14" height="10" fill="none" stroke="#222" strokeWidth="1.400"><path d="m2 5.500 3 3 7-7" /></svg><i className="ml-[36px] h-[11px] w-[11px] border border-[#ddd] bg-black" /><i className="ml-[5px] h-[14px] w-[14px] rounded-full bg-white" />
          </div>
          <div className="mt-auto flex h-[15px] items-center justify-between bg-[#f0f0f0] px-[4px]">
            <svg width="6" height="9" fill="none" stroke="#444" strokeWidth="1.500"><path d="M5 1 1.500 4.500 5 8" /></svg>
            <i className="ml-[6px] mr-auto h-[14px] w-[66px] bg-[#cdcdcd]" />
            <svg width="6" height="9" fill="none" stroke="#444" strokeWidth="1.500"><path d="m1 1 3.500 3.500L1 8" /></svg>
          </div>
        </div>
      </div>
    </aside>
  );
}

export default function App() {
  return (
    <div className="relative flex h-[719px] w-[1280px] overflow-hidden bg-[#ebecf0] font-['Noto_Sans','Open_Sans',sans-serif] text-[11.500px] leading-4 text-[#333]">
      <Defs />
      <Sidebar />
      <main className="flex min-w-0 flex-1 flex-col">
        <header className="flex h-[21px] shrink-0 items-center bg-white text-[#111]">
          <Rhino className="ml-[2px] h-[15px] w-[15px]" />
          <div className="ml-[5px]"><Label text="exhibiti_2.3dm (7 MB) - Rhinoceros 7 Corporate - [Top]" w={270} /></div>
          <svg className="ml-auto" width="114" height="20" fill="none" stroke="#222"><path d="M0 9.500h10M43.500 6.500h7v7h-7zM45.500 6.500v-2h7v7h-2M85.500 5l9 9m0-9-9 9" /></svg>
        </header>
        <nav className="flex h-[18px] shrink-0 items-center bg-white text-[#222]"><LabelRow items={menu} start={59} /></nav>
        <section className="flex h-[52px] shrink-0 flex-col border-b border-[#d2d6e2] pl-[2px] pr-[2px] pt-[4px] text-[#222]">
          <div className="flex h-[27px] border-b border-l border-[#c7cddd] bg-white">
            <div className="-mt-[2px] flex-1 pl-[5px] leading-[14px]"><Label text="Comando: _New" w={83} /><Label text={'Se ha leído correctamente el archivo "C:\\Users\\hp\\Desktop\\Challenge_2\\exhibiti_2.3dm"'} w={437} /></div>
            <div className="flex w-[14px] flex-col items-center justify-around bg-[#f0f0f0]"><svg width="8" height="6" fill="none" stroke="#555" strokeWidth="2"><path d="m1 5 3-3 3 3" /></svg><svg width="8" height="6" fill="none" stroke="#555" strokeWidth="2"><path d="m1 1 3 3 3-3" /></svg></div>
          </div>
          <div className="flex h-[17px] items-center border-l border-[#c7cddd] bg-white font-bold text-[#111]">
            <div className="flex-1 pl-[5px]"><Label text="Comando:" w={52} /></div>
            <svg width="13" height="17"><path d="M.5 1.500h12v6H.5zM.5 9h12v6.500H.5z" fill="#f0f0f0" stroke="#999" /><path d="m6.500 3 2.500 3H4zM4 11h5l-2.500 3z" fill="#111" /></svg>
          </div>
        </section>
        <section className="flex h-[57px] shrink-0 flex-col">
          <div className="relative flex h-[19px] items-center overflow-hidden pt-[4px]">
            <svg className="absolute left-0 top-0" width="1221" height="19" fill="none" stroke="#cbd3e3"><path d="M3.500 4v15M6 10l5-6.500h57.500v15H1221" /></svg>
            <LabelRow items={tabs} start={59} />
            <div className="absolute right-0 top-[3px] flex h-[15px] w-[29px] items-center border-l border-t border-[#cbd3e3] bg-[#ebecf0]">
              <svg width="28" height="15" fill="none" stroke="#222"><path d="m3 4.500 3 3-3 3m4-6 3 3-3 3" strokeWidth="1.300" /><circle cx="20" cy="6.500" r="4.500" stroke="#888" /><circle cx="20" cy="6.500" r="1" stroke="#888" /><path d={ring(20, 6.5, 4.5, 1.5)} stroke="#888" strokeWidth="1.500" /></svg>
            </div>
          </div>
          <div className="flex h-[30px] items-center pl-[6px]">
            {toolbar.map(([n, t], i) => <div key={i} className="w-[26.280px] shrink-0"><Ico tri={t}>{n}</Ico></div>)}
          </div>
        </section>
        <div className="flex h-[533px] shrink-0">
          <aside className="flex w-[61px] shrink-0 flex-col pl-[1px]">
            <i className="ml-[2px] mt-[2px] h-[3px] w-[51px] border-y border-[#cfd5e3]" />
            <div className="mt-[1px] grid grid-cols-[26px_26px] auto-rows-[26.300px]">
              {palette.map(([n, t], i) => <Ico key={i} tri={t}>{n}</Ico>)}
            </div>
          </aside>
          <div className="flex w-[972px] shrink-0 flex-col">
            <div className="relative h-[507px] w-[972px] bg-[#9ca3ab] shadow-[0_0_0_1px_#b4bac5]">
              <Drawing />
              <div className="absolute left-0 top-0 flex h-[16px] w-[45px] items-center bg-[#8298ec] pl-[6px] font-semibold text-[#252b42]"><Label text="Top" w={21} /><i className="ml-[6px] h-[14px] w-px bg-[#333b62]" /><svg width="10" height="6"><path d="M1.500 1h7L5 5z" fill="#252b42" /></svg></div>
            </div>
            <div className="flex h-[22px] items-center text-[#222]">
              <div className="relative flex h-[20px] w-[32px] items-center pl-[6px]"><svg className="absolute left-0 top-0" width="32" height="20" fill="none" stroke="#bdc5d6"><path d="M.5 0v12l6 6.500h22l2-2V0" /></svg><Label text="Top" w={20} /></div>
              <LabelRow items={[["Perspective", 160, 216], ["Front", 230, 257], ["Right", 271, 298]]} start={152} />
              <svg width="11" height="11" className="ml-[12px]" fill="#fff" stroke="#888"><path d="M4.500 1.500h2v3h3v2h-3v3h-2v-3h-3v-2h3z" /></svg>
            </div>
          </div>
          <LayerPanel />
        </div>
        <div className="flex h-[19px] shrink-0 items-center">
          <i className="-mr-[3px] ml-[2px] h-[15px] w-px bg-[#cfd5e3]" />
          {snaps.map(([t, a, b, s], i) => (
            <div key={t} className="flex shrink-0 items-center" style={{ marginLeft: a - (i ? snaps[i - 1][2] : 59) }}>
              <svg width="13" height="13" className="mr-[2px]" fill="none"><rect x=".5" y=".5" width="12" height="12" fill={s === 3 ? "#ddd" : s === 2 ? "#8cbbe3" : "#fff"} stroke={s === 3 ? "#bbb" : s === 2 ? "#286ba5" : "#555"} />{s === 1 && <path d="m3 6.500 2.500 3 5-6" stroke="#222" strokeWidth="1.200" />}{s === 2 && <path d="M3.500 3.500h6v6h-6z" fill="#888" />}</svg>
              <Label text={t} w={b - a - 15} />
            </div>
          ))}
        </div>
        <footer className="flex h-[19px] shrink-0 border-t border-[#c9d0de]">
          {status.map(([t, a, x, y, b, on]) => (
            <div key={t} className={"flex h-full shrink-0 items-center border-r border-[#c9d0de] " + (on ? "bg-[#d2dbf1] font-bold" : "")} style={{ width: b - a }}>
              {a === 436 && <i className="-mr-[17px] ml-[4px] h-[13px] w-[13px] bg-black" />}
              <div style={{ marginLeft: x - a }}><Label text={t} w={y - x} /></div>
            </div>
          ))}
        </footer>
      </main>
    </div>
  );
}
